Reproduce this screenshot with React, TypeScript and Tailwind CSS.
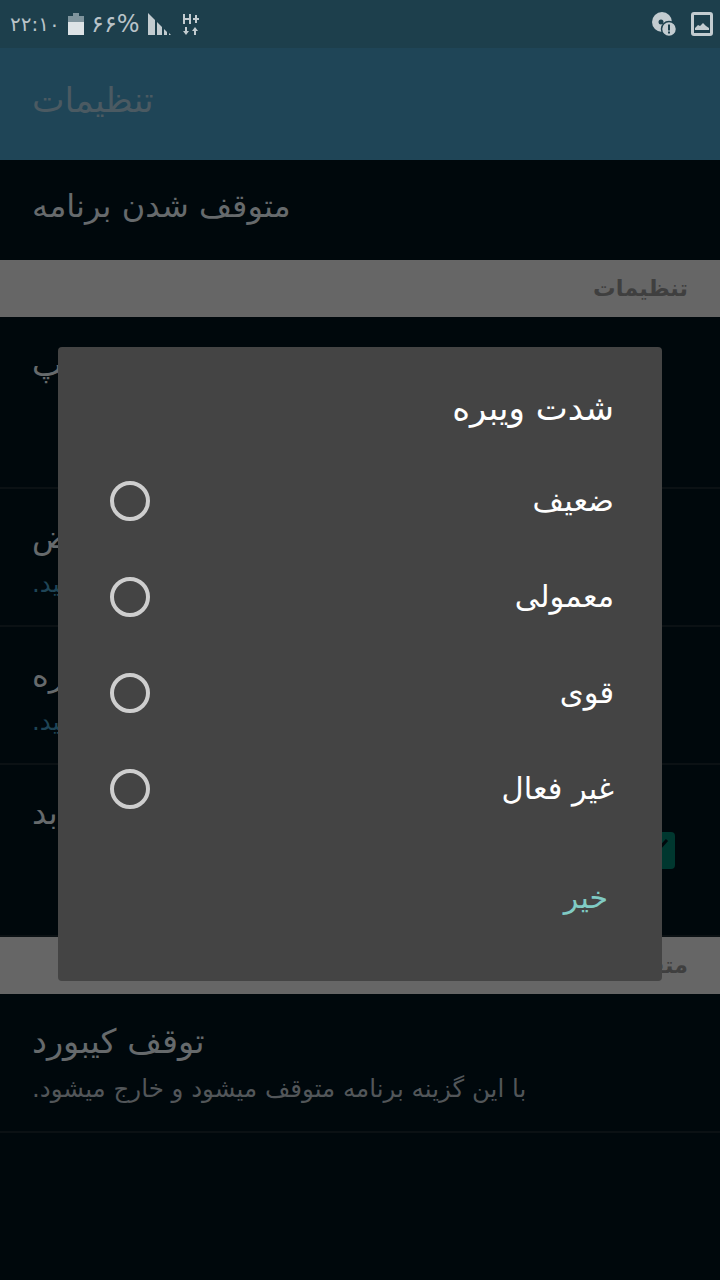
import React from 'react';

const font = "font-['DejaVu_Sans','Noto_Sans',sans-serif]";

const Row = ({ title, sub, className, subClass, titleClass = 'text-[32px]' }: { title: string; sub?: string; className: string; subClass?: string; titleClass?: string }) => (
  <div dir="ltr" className={`flex flex-col items-start border-b-2 border-[#0b1114] pl-8 ${className}`}>
    <div dir="rtl" className={`leading-[40px] text-[#666a6c] ${titleClass}`}>{title}</div>
    {sub && <div dir="rtl" className={`mt-[12px] text-[24.5px] leading-[30px] ${subClass}`}>{sub}</div>}
  </div>
);

const Section = ({ label }: { label: string }) => (
  <div className="flex h-[57px] items-center bg-[#666666] px-8 text-[22.5px] font-bold text-[#3f3f3f]">{label}</div>
);

const options = ['ضعیف', 'معمولی', 'قوی', 'غیر فعال'];

export default function App() {
  return (
    <div dir="rtl" className={`relative h-[1280px] w-[720px] overflow-hidden bg-[#00080c] ${font}`}>
      <div dir="ltr" className="flex h-12 items-center justify-between bg-[#1d3f4c] pl-[10px] pr-[7px]">
        <div className="flex items-center text-[#b9c3c8]">
          <span className="w-[48px] text-[20px] leading-none">۲۲:۱۰</span>
          <svg width="18" height="24" viewBox="0 0 18 24" className="ml-[9px]">
            <path d="M6 1h6v3h5v6H1V4h5z" fill="#7f949d" />
            <path d="M1 10h16v13H1z" fill="#dde3e6" />
          </svg>
          <span className="ml-[6px] w-[47px] text-[24px] leading-none">۶۶%</span>
          <svg width="26" height="24" viewBox="0 0 26 24" className="ml-[9px]">
            <path d="M1 1l7 7v15H1z" fill="#c3ccd0" />
            <path d="M10 10l5 5v8h-5z" fill="#c3ccd0" />
            <path d="M17 17l3 3v3h-3z" fill="#c3ccd0" />
            <path d="M22 21l2 2h-2z" fill="#c3ccd0" />
          </svg>
          <svg width="18" height="24" viewBox="0 0 18 24" className="ml-[9px]" fill="#c3ccd0">
            <path d="M1 2h2v4h4V2h2v10H7V8H3v4H1z" />
            <path d="M11 6h2V3h2v3h2v2h-2v3h-2V8h-2z" />
            <path d="M3 15h2v4h2l-3 4-3-4h2z" />
            <path d="M13 15l3 4h-2v4h-2v-4h-2z" />
          </svg>
        </div>
        <div className="flex items-center gap-[14px]">
          <svg width="26" height="26" viewBox="0 0 26 26">
            <circle cx="11" cy="11" r="10" fill="#c3ccd0" />
            <circle cx="10" cy="11" r="2.5" fill="#1d3f4c" />
            <circle cx="18" cy="18" r="7.5" fill="#c3ccd0" stroke="#1d3f4c" strokeWidth="1.5" />
            <path d="M17 13.5h2v6h-2zM17 20.5h2v2h-2z" fill="#1d3f4c" />
          </svg>
          <svg width="22" height="24" viewBox="0 0 22 24">
            <rect x="1.5" y="1.5" width="19" height="21" rx="1.5" fill="none" stroke="#c3ccd0" strokeWidth="3" />
            <path d="M4 18v-2l3-3 2 1 3-3 3 3 3 2v2z" fill="#c3ccd0" />
          </svg>
        </div>
      </div>

      <div dir="ltr" className="flex h-[112px] items-center bg-[#1f4557] px-8 pb-[6px]">
        <span dir="rtl" className="text-[34.5px] text-[#4b5a62]">تنظیمات</span>
      </div>

      <div dir="ltr" className="flex h-[100px] items-center px-8 pb-[8px] text-[32px] text-[#666a6c]">
        <span dir="rtl">متوقف شدن برنامه</span>
      </div>
      <Section label="تنظیمات" />

      <Row title="نمایش کلید چپ" className="h-[172px] pt-[28px]" />
      <Row title="صدای پیش فرض" sub="برای تغییر کلیک کنید." subClass="text-[#1f4557]" className="h-[138px] pt-[28px]" />
      <Row title="شدت ویبره" sub="برای تغییر کلیک کنید." subClass="text-[#1f4557]" className="h-[138px] pt-[28px]" />
      <div className="relative h-[172px]">
        <Row title="اندازه کیبورد افزایش یابد" className="h-[172px] border-b-0 pt-[28px]" />
        <div dir="ltr" className="absolute left-[620px] top-[67px] flex h-[37px] w-[55px] items-start justify-end rounded-[4px] bg-[#00372f] pr-[6px] pt-[7px]">
          <svg width="12" height="12" viewBox="0 0 12 12"><path d="M1 11L10 1" stroke="#00080c" strokeWidth="3" /></svg>
        </div>
      </div>
      <Section label="متفرقه" />
      <Row title="توقف کیبورد" titleClass="text-[33.5px]" sub="با این گزینه برنامه متوقف میشود و خارج میشود." subClass="text-[#525659]" className="h-[139px] pt-[28px]" />

      <div className="absolute left-[58px] top-[347px] flex h-[634px] w-[604px] flex-col rounded-[4px] bg-[#444444] pr-[48px]">
        <div className="mt-[39px] h-[44px] text-[34px] leading-[44px] text-white">شدت ویبره</div>
        <div className="mt-[23px] flex flex-col">
          {options.map(o => (
            <div key={o} className="flex h-[96px] items-center justify-between pl-[52px]">
              <span className="text-[30.5px] text-white">{o}</span>
              <span className="h-10 w-10 rounded-full border-4 border-[#cecece]" />
            </div>
          ))}
        </div>
        <div className="mt-[41px] pr-[6px] text-[30px] leading-[40px] text-[#80cbc4]">خیر</div>
      </div>
    </div>
  );
}
